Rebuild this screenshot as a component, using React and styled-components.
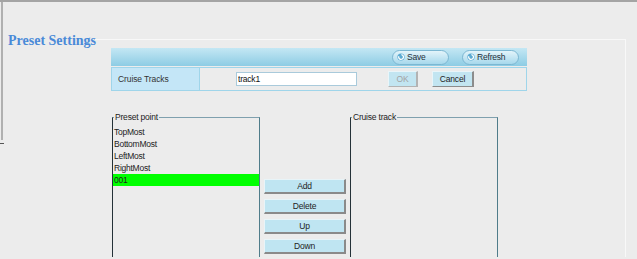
import React from "react";
import styled, { createGlobalStyle } from "styled-components";

const GlobalStyle = createGlobalStyle`
  html, body {
    margin: 0;
    padding: 0;
    background: #ececec;
  }
  body {
    font-family: "Liberation Sans", Arial, sans-serif;
    color: #222;
  }
`;

const presetPoints = ["TopMost", "BottomMost", "LeftMost", "RightMost", "001"];
const selectedPoint = "001";

const RefreshIcon = () => (
  <svg width="8" height="8" viewBox="0 0 8 8">
    <circle cx="4" cy="4" r="3.6" fill="#5aaad2" />
    <path
      d="M4.4 1.6 A2.4 2.4 0 1 1 1.8 3.2"
      fill="none"
      stroke="#fff"
      strokeWidth="1.3"
    />
  </svg>
);

const App = () => {
  return (
    <>
      <GlobalStyle />
      <Window>
        <Title>Preset Settings</Title>
        <Panel>
          <HeaderBar>
            <PillButton>
              <RefreshIcon />
              <span>Save</span>
            </PillButton>
            <PillButton>
              <RefreshIcon />
              <span>Refresh</span>
            </PillButton>
          </HeaderBar>

          <FormRow>
            <LabelCell>Cruise Tracks</LabelCell>
            <TrackInput defaultValue="track1" />
            <FormButton disabled $width={30} $gap={31}>
              OK
            </FormButton>
            <FormButton $width={42} $gap={14}>
              Cancel
            </FormButton>
          </FormRow>

          <Columns>
            <Group>
              <GroupLegend>Preset point</GroupLegend>
              <PointList>
                {presetPoints.map((p) => (
                  <PointItem key={p} $selected={p === selectedPoint}>
                    {p}
                  </PointItem>
                ))}
              </PointList>
            </Group>

            <ActionColumn>
              <ActionButton>Add</ActionButton>
              <ActionButton>Delete</ActionButton>
              <ActionButton>Up</ActionButton>
              <ActionButton>Down</ActionButton>
            </ActionColumn>

            <Group>
              <GroupLegend>Cruise track</GroupLegend>
              <PointList />
            </Group>
          </Columns>
        </Panel>
      </Window>
    </>
  );
};

export default App;

/////////////////////////////  STYLED COMPONENTS  /////////////////////////////

const Window = styled.div`
  position: relative;
  display: flex;
  align-items: flex-start;
  height: 257px;
  overflow: hidden;
  border-top: 2px solid #a4a4a4;
  padding-top: 31px;
  box-sizing: border-box;

  &::before {
    content: "";
    position: absolute;
    left: 1px;
    top: 0;
    width: 2px;
    height: 138px;
    background: #b0b0b0;
  }

  &::after {
    content: "";
    position: absolute;
    left: 0;
    top: 141px;
    width: 4px;
    height: 1px;
    background: #555;
  }
`;

const Title = styled.h1`
  margin: 0 0 0 8px;
  width: 87px;
  flex: none;
  font-family: "Liberation Serif", "Times New Roman", serif;
  font-size: 14px;
  line-height: 16px;
  font-weight: bold;
  color: #4a8ad8;
  white-space: nowrap;
`;

const Panel = styled.div`
  margin-top: 6px;
  width: 531px;
  height: 240px;
  flex: none;
  border-top: 1px solid #f8f8f8;
  border-right: 1px solid #f8f8f8;
  padding: 8px 0 0 16px;
  box-sizing: border-box;
`;

const HeaderBar = styled.div`
  display: flex;
  align-items: center;
  justify-content: flex-end;
  gap: 13px;
  width: 416px;
  height: 18px;
  padding-right: 8px;
  box-sizing: border-box;
  background: linear-gradient(#c4e7f4, #8dcce4);
`;

const PillButton = styled.button`
  display: flex;
  align-items: center;
  gap: 2px;
  width: 57px;
  height: 15px;
  padding: 0 0 0 4px;
  box-sizing: border-box;
  border: 1px solid #7cb7d2;
  border-radius: 8px;
  background: linear-gradient(#e3f4fa, #a6d8ec);
  font-family: "Liberation Sans", Arial, sans-serif;
  font-size: 8.5px;
  letter-spacing: -0.2px;
  color: #1f2f3a;
  cursor: pointer;
`;

const FormRow = styled.div`
  display: flex;
  align-items: center;
  width: 416px;
  height: 24px;
  margin-top: 1px;
  border: 1px solid #9fd5ea;
  box-sizing: border-box;
`;

const LabelCell = styled.div`
  align-self: stretch;
  display: flex;
  align-items: center;
  width: 88px;
  padding-left: 6px;
  box-sizing: border-box;
  background: #c4e6f7;
  border-right: 1px solid #9fd5ea;
  font-size: 8.5px;
  letter-spacing: -0.1px;
  color: #333;
`;

const TrackInput = styled.input`
  margin-left: 36px;
  width: 121px;
  height: 14px;
  padding: 0 1px;
  box-sizing: border-box;
  border: 1px solid #a9cadb;
  background: #fff;
  font-family: "Liberation Sans", Arial, sans-serif;
  font-size: 8.5px;
  letter-spacing: -0.2px;
  color: #111;
  outline: none;
`;

const FormButton = styled.button`
  margin-left: ${(p) => p.$gap}px;
  width: ${(p) => p.$width}px;
  height: 16px;
  padding: 0;
  box-sizing: border-box;
  background: #c2e5f1;
  border-top: 1px solid #e9f5f9;
  border-left: 1px solid #e9f5f9;
  border-right: 2px solid #8c8c8c;
  border-bottom: 1px solid #8c8c8c;
  font-family: "Liberation Sans", Arial, sans-serif;
  font-size: 8.5px;
  letter-spacing: -0.2px;
  color: #222;

  &:disabled {
    color: #a3a3a3;
    border-right-color: #b3b3b3;
    border-bottom-color: #b3b3b3;
  }
`;

const Columns = styled.div`
  display: flex;
  align-items: flex-start;
  gap: 4px;
  margin-top: 21px;
  margin-left: 1px;
`;

const Group = styled.fieldset`
  width: 148px;
  height: 160px;
  margin: 0;
  padding: 4px 0 0;
  box-sizing: border-box;
  border: 1px solid #4f7c8a;
  border-top-color: #7fa0ae;
  border-left-color: #243238;
  min-inline-size: 0;
`;

const GroupLegend = styled.legend`
  margin-left: 1px;
  padding: 0 1px;
  font-size: 8.5px;
  line-height: 10px;
  letter-spacing: -0.2px;
  color: #222;
`;

const PointList = styled.div`
  display: flex;
  flex-direction: column;
`;

const PointItem = styled.div`
  height: 12px;
  line-height: 12px;
  padding-left: 1px;
  font-size: 8.5px;
  letter-spacing: -0.25px;
  color: #222;
  background: ${(p) => (p.$selected ? "#00ff00" : "transparent")};
`;

const ActionColumn = styled.div`
  display: flex;
  flex-direction: column;
  gap: 5px;
  padding-top: 67px;
`;

const ActionButton = styled.button`
  width: 82px;
  height: 15px;
  padding: 0;
  box-sizing: border-box;
  background: #bfe5f2;
  border-top: 1px solid #e8f4f8;
  border-left: 1px solid #e8f4f8;
  border-right: 2px solid #8a8a8a;
  border-bottom: 2px solid #8a8a8a;
  font-family: "Liberation Sans", Arial, sans-serif;
  font-size: 8.5px;
  letter-spacing: -0.2px;
  color: #222;
`;
